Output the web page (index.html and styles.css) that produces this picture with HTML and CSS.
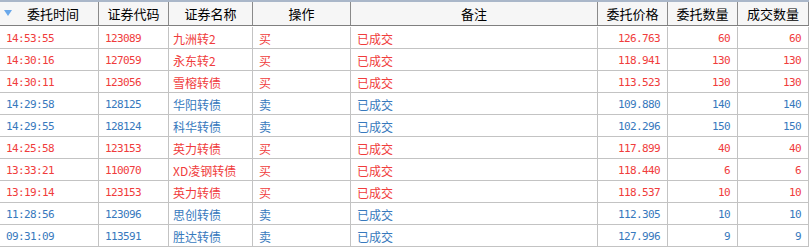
FILE: index.html
```html
<!DOCTYPE html>
<html lang="zh-CN">
<head>
<meta charset="utf-8">
<title>委托</title>
<link rel="stylesheet" href="styles.css">
</head>
<body>
<div class="grid">
  <div class="row head">
    <div class="h c1"><span class="sort"></span>委托时间</div>
    <div class="h">证券代码</div>
    <div class="h">证券名称</div>
    <div class="h">操作</div>
    <div class="h">备注</div>
    <div class="h">委托价格</div>
    <div class="h">委托数量</div>
    <div class="h last">成交数量</div>
  </div>

  <div class="row buy"><div class="d num">14:53:55</div><div class="d num">123089</div><div class="d name">九洲转2</div><div class="d">买</div><div class="d">已成交</div><div class="d num r">126.763</div><div class="d num r">60</div><div class="d num r last">60</div></div>
  <div class="row buy"><div class="d num">14:30:16</div><div class="d num">127059</div><div class="d name">永东转2</div><div class="d">买</div><div class="d">已成交</div><div class="d num r">118.941</div><div class="d num r">130</div><div class="d num r last">130</div></div>
  <div class="row buy"><div class="d num">14:30:11</div><div class="d num">123056</div><div class="d name">雪榕转债</div><div class="d">买</div><div class="d">已成交</div><div class="d num r">113.523</div><div class="d num r">130</div><div class="d num r last">130</div></div>
  <div class="row sell"><div class="d num">14:29:58</div><div class="d num">128125</div><div class="d name">华阳转债</div><div class="d">卖</div><div class="d">已成交</div><div class="d num r">109.880</div><div class="d num r">140</div><div class="d num r last">140</div></div>
  <div class="row sell"><div class="d num">14:29:55</div><div class="d num">128124</div><div class="d name">科华转债</div><div class="d">卖</div><div class="d">已成交</div><div class="d num r">102.296</div><div class="d num r">150</div><div class="d num r last">150</div></div>
  <div class="row buy"><div class="d num">14:25:58</div><div class="d num">123153</div><div class="d name">英力转债</div><div class="d">买</div><div class="d">已成交</div><div class="d num r">117.899</div><div class="d num r">40</div><div class="d num r last">40</div></div>
  <div class="row buy"><div class="d num">13:33:21</div><div class="d num">110070</div><div class="d name">XD凌钢转债</div><div class="d">买</div><div class="d">已成交</div><div class="d num r">118.440</div><div class="d num r">6</div><div class="d num r last">6</div></div>
  <div class="row buy"><div class="d num">13:19:14</div><div class="d num">123153</div><div class="d name">英力转债</div><div class="d">买</div><div class="d">已成交</div><div class="d num r">118.537</div><div class="d num r">10</div><div class="d num r last">10</div></div>
  <div class="row sell"><div class="d num">11:28:56</div><div class="d num">123096</div><div class="d name">思创转债</div><div class="d">卖</div><div class="d">已成交</div><div class="d num r">112.305</div><div class="d num r">10</div><div class="d num r last">10</div></div>
  <div class="row sell"><div class="d num">09:31:09</div><div class="d num">113591</div><div class="d name">胜达转债</div><div class="d">卖</div><div class="d">已成交</div><div class="d num r">127.996</div><div class="d num r">9</div><div class="d num r last">9</div></div>
</div>
</body>
</html>
```
FILE: styles.css
```css
* { box-sizing: border-box; }
html, body { margin: 0; padding: 0; background: #ffffff; }
body {
  width: 809px;
  height: 249px;
  overflow: hidden;
  font-family: "Noto Sans CJK SC", "DejaVu Sans", sans-serif;
  font-size: 12px;
}
.grid {
  border-top: 2px solid #aab7c9;
  display: flex;
  flex-direction: column;
}
.row {
  display: grid;
  grid-template-columns: 99px 70px 84px 98px 247px 70px 70px 71px;
}
.head {
  height: 24px;
  background: #f6f6f6;
  border-bottom: 1px solid #7f7f7f;
  margin-bottom: 1px;
}
.h {
  position: relative;
  border-right: 1px solid #8a8a8a;
  text-align: center;
  font-size: 13px;
  line-height: 23px;
  color: #000;
  white-space: nowrap;
}
.h.c1 { padding-left: 8px; }
.h.last { border-right: 1px solid #8a8a8a; }
.sort {
  position: absolute;
  left: 4px;
  top: 8px;
  width: 0;
  height: 0;
  border-left: 4px solid transparent;
  border-right: 4px solid transparent;
  border-top: 6px solid #6aa8ea;
}
.row:not(.head) {
  height: 22px;
  border-bottom: 1px solid #c3c3c3;
}
.d {
  border-right: 1px solid #c3c3c3;
  padding: 3px 7px 0 6px;
  line-height: 18px;
  white-space: nowrap;
  overflow: hidden;
}
.d.name { padding-left: 4px; }
.d.r { text-align: right; }
.num {
  font-family: "DejaVu Sans Mono", "Noto Sans CJK SC", monospace;
  font-size: 11px;
  letter-spacing: -0.62px;
}
.buy { color: #f03c3c; }
.sell { color: #3779bd; }
```
